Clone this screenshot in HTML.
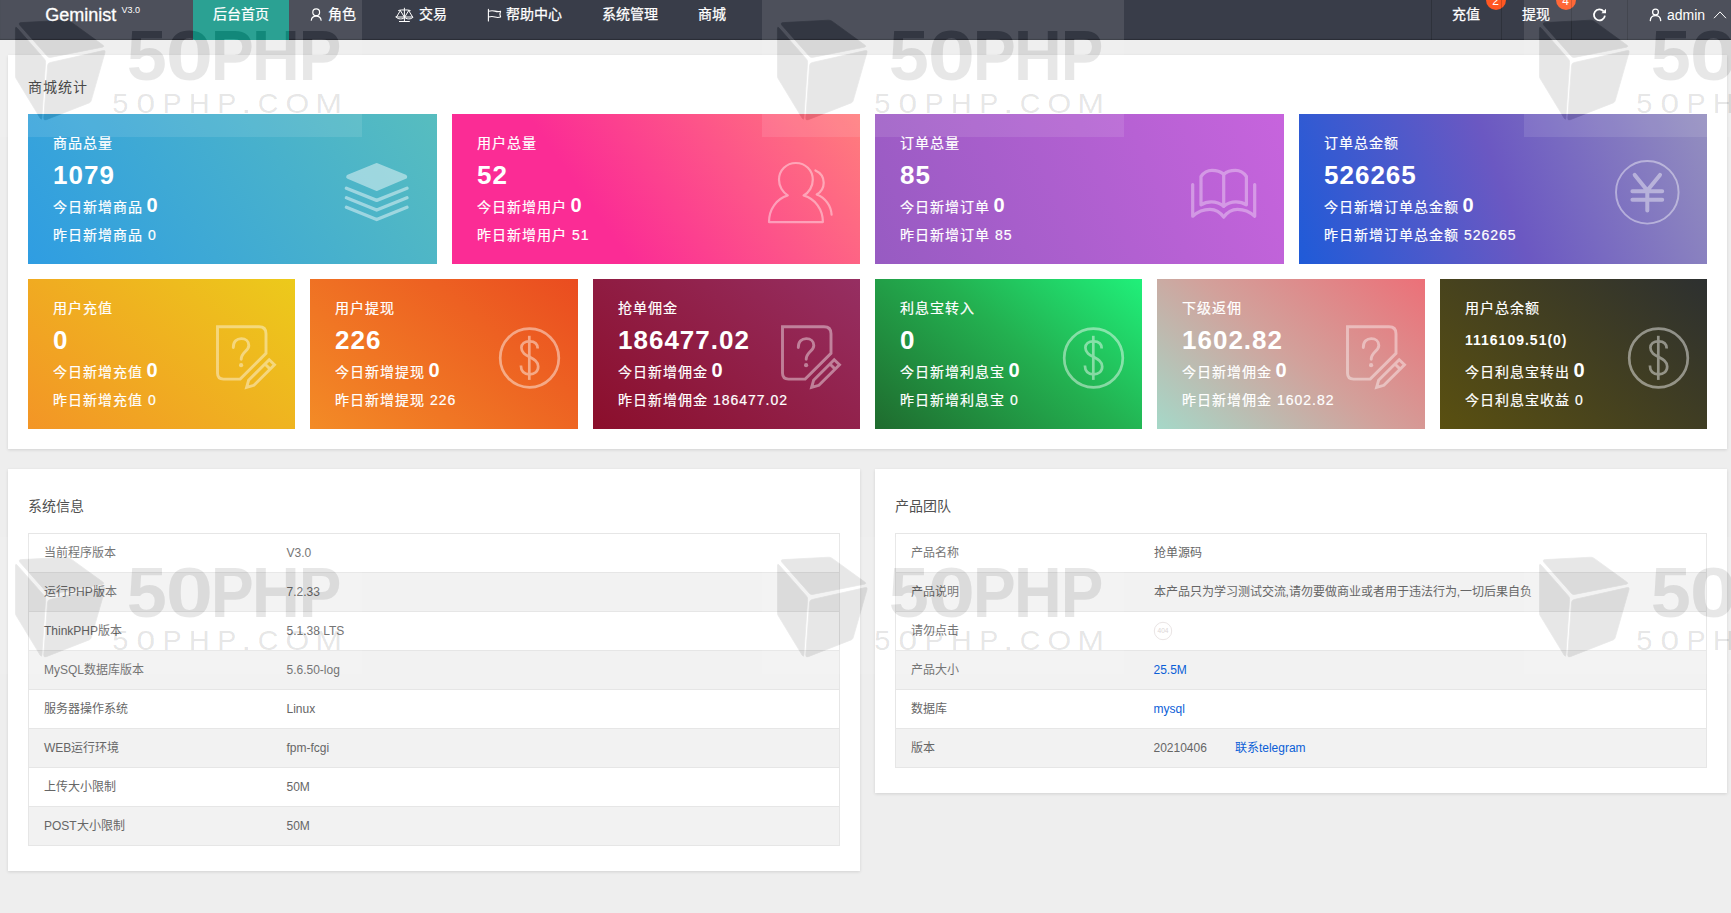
<!DOCTYPE html>
<html lang="zh-CN">
<head>
<meta charset="utf-8">
<title>Geminist</title>
<style>
*{box-sizing:border-box;margin:0;padding:0}
html,body{width:1731px;height:913px;overflow:hidden}
body{position:relative;background:#eeeeee;font-family:"Liberation Sans",sans-serif;font-size:14px;color:#333;-webkit-font-smoothing:antialiased}
a{text-decoration:none;color:#0b5ed7}
/* ---------- top nav ---------- */
.nav{position:absolute;left:0;top:-10px;width:1731px;height:50px;background:#393d49;color:#fff;box-shadow:inset 0 -1px 1px rgba(0,0,0,.28);z-index:2}
.nav .it{position:absolute;top:0;height:50px;line-height:50px;font-size:14px;white-space:nowrap;color:#fff}
.nav .navico{position:absolute;left:0;top:10px}
.nav .cj{top:-1px;-webkit-text-stroke:.25px #fff}
.nav .logo{left:0;width:193px;font-size:18px}
.nav .logo b{font-weight:normal;position:absolute;left:45.3px;top:0;-webkit-text-stroke:.3px #fff}
.nav .logo sup{position:absolute;left:121.5px;top:-4.8px;font-size:9px}
.nav .act{left:193px;top:0;width:96px;line-height:48px;background:#149787;text-align:center}
.nav .sep{position:absolute;top:0;width:1px;height:50px;background:rgba(0,0,0,.18)}
.badge{position:absolute;width:20px;height:20px;border-radius:10px;background:#ff5722;color:#fff;font-size:12px;line-height:22px;text-align:center}
/* ---------- panels ---------- */
.panel{position:absolute;background:#fff;box-shadow:0 1px 3px rgba(0,0,0,.12)}
.ttl{position:absolute;font-size:14px;line-height:20px;color:#505050;white-space:nowrap}
/* ---------- stat cards ---------- */
.card{position:absolute;height:150px;color:#fff;padding:15px 25px;letter-spacing:1px;white-space:nowrap;overflow:hidden}
.card div{height:28px;line-height:28px;font-size:14px;font-weight:normal;-webkit-text-stroke:.2px #fff}
.card div.num{height:36px;line-height:36px;font-size:26px;font-weight:bold;-webkit-text-stroke:0}
.card div.num.sm{font-size:14px}
.card div b{font-size:20px;line-height:20px;font-weight:bold;margin-left:-1.3px;-webkit-text-stroke:0}
.card svg{position:absolute;top:46px;width:65px;height:65px;overflow:visible;fill:none;stroke:#fff;stroke-linecap:round;stroke-linejoin:round}
.r1 svg{right:28px}
.r2 svg{right:18px}
/* ---------- tables ---------- */
table{position:absolute;border-collapse:collapse;width:812px;font-size:12px;color:#666;table-layout:fixed}
td{height:39px;padding:0 15px;border:1px solid #e6e6e6;border-left:none;border-right:none;line-height:20px;white-space:nowrap}
table{border:1px solid #e6e6e6}
tr:nth-child(even) td{background:#f2f2f2}
td:first-child{width:243px}
/* ---------- watermark ---------- */
.wms{position:absolute;left:0;top:0;z-index:5;pointer-events:none}
</style>
</head>
<body>

<!-- top navigation -->
<div class="nav">
  <div class="it logo"><b>Geminist</b><sup>V3.0</sup></div>
  <div class="it act cj">后台首页</div>
  <div class="it cj" style="left:328px">角色</div>
  <div class="it cj" style="left:419px">交易</div>
  <div class="it cj" style="left:506px">帮助中心</div>
  <div class="it cj" style="left:602px">系统管理</div>
  <div class="it cj" style="left:698px">商城</div>
  <div class="sep" style="left:1431px"></div>
  <div class="it cj" style="left:1452px">充值</div>
  <div class="badge" style="left:1485.5px;top:.3px">2</div>
  <div class="sep" style="left:1501px"></div>
  <div class="it cj" style="left:1522px">提现</div>
  <div class="badge" style="left:1555.5px;top:.3px">4</div>
  <div class="sep" style="left:1571px"></div>
  <div class="sep" style="left:1627px"></div>
  <div class="it" style="left:1667px">admin</div>
  <svg class="navico" width="1731" height="40" viewBox="0 0 1731 40" fill="none" stroke="#fff" stroke-linecap="round" stroke-linejoin="round">
    <g stroke-width="1.2"><circle cx="316.2" cy="12.3" r="3.4"/><path d="M311.3,20.2 C311.6,17.6 313.6,16.1 316.2,16.1 C318.8,16.1 320.8,17.6 321.1,20.2"/></g>
    <g stroke-width="1"><path d="M404.4,8.2 V21.4 M399.4,21.5 H409.4 M398.6,10.5 C401,9.7 402.6,10 404.4,10 C406.2,10 407.8,9.7 410.2,10.5"/><path d="M400.4,10.6 L396.5,17 M400.4,10.6 L404.3,17 M396.2,17 H404.6 C404,19.6 396.8,19.6 396.2,17 Z"/><path d="M408.7,10.6 L404.8,17 M408.7,10.6 L412.6,17 M404.5,17 H412.9 C412.3,19.6 405.1,19.6 404.5,17 Z"/></g>
    <g stroke-width="1.1"><path d="M488.4,9.4 V21 M488.4,11.2 C491,10.5 493,10.5 495,11.1 C497,11.7 499,11.7 500.6,11.2 L499.9,14.1 L500.6,17 C499,17.5 497,17.6 495,17 C493,16.4 491,16.4 488.4,17"/></g>
    <g stroke-width="1.8"><path d="M1603.6,11.3 A5.5,5.5 0 1 0 1604.9,15.6" stroke-linecap="butt"/><path d="M1606,8.7 V13.3 H1601.4 Z" fill="#fff" stroke="none"/></g>
    <g stroke-width="1.3"><circle cx="1655.5" cy="12.1" r="2.9"/><path d="M1650.3,20.6 C1650.5,17.6 1652.7,15.7 1655.5,15.7 C1658.3,15.7 1660.5,17.6 1660.7,20.6"/></g>
    <path stroke-width="1" d="M1714.3,17.9 L1720,11.9 L1725.7,17.9"/>
  </svg>
</div>

<!-- statistics panel -->
<div class="panel" style="left:8px;top:55px;width:1719px;height:394px"></div>
<div class="ttl" style="left:28px;top:77px;letter-spacing:1px">商城统计</div>

<div class="card r1" style="left:28px;top:114px;width:409px;background:linear-gradient(-125deg,#57bdbf,#2f9de2)">
  <div>商品总量</div><div class="num">1079</div><div>今日新增商品 <b>0</b></div><div>昨日新增商品 0</div>
  <svg viewBox="0 0 65 65"><g opacity=".45"><path d="M4.4,16.8 L32.7,5.2 L61,16.8 L32.7,28.8 Z" fill="#fff" stroke-width="4.4"/><g stroke-width="3.3"><path d="M2.4,28.2 L32.7,40.4 L63,28.2"/><path d="M2.4,37.8 L32.7,50 L63,37.8"/><path d="M2.4,47.3 L32.7,59.5 L63,47.3"/></g></g></svg>
</div>
<div class="card r1" style="left:452px;top:114px;width:408px;background:linear-gradient(-125deg,#ff7d7d,#fb2c95 65%)">
  <div>用户总量</div><div class="num">52</div><div>今日新增用户 <b>0</b></div><div>昨日新增用户 51</div>
  <svg viewBox="0 0 65 65"><g stroke-width="2.2" opacity=".42"><path d="M20.8,35.4 C15.5,32.5 12,26 12,19.8 C12,10.2 19.5,3 28.9,3 C38.3,3 45.8,10.2 45.8,19.8 C45.8,26 42.3,32.5 36.6,35.4 C48.3,39 55.9,49.3 55.9,62.1 L2,62.1 C2,49.3 9.3,39 20.8,35.4 Z"/><path d="M48.4,10.4 C53.5,12.6 56.7,17.4 56.7,22.7 C56.7,27.6 54,32 49.7,34.5 C58.2,37.8 64,45.5 64.6,54.7"/></g></svg>
</div>
<div class="card r1" style="left:875px;top:114px;width:409px;background:linear-gradient(-113deg,#c764dd,#975bc2)">
  <div>订单总量</div><div class="num">85</div><div>今日新增订单 <b>0</b></div><div>昨日新增订单 85</div>
  <svg viewBox="0 0 65 65"><g stroke-width="3.2" opacity=".35"><path d="M1.7,24.6 V56.2 C8,50.5 14,49.3 18.9,49.3 C25,49.3 29.5,52.5 32.7,57.2 C35.9,52.5 40.4,49.3 46.5,49.3 C51.4,49.3 57.4,50.5 63.7,56.2 V24.6"/><path d="M10,44.8 V16.5 C13,12.3 17,10.4 21,10.4 C26,10.4 30,12 32.7,14.2 C35.4,12 39.4,10.4 44.4,10.4 C48.4,10.4 52.4,12.3 55.4,16.5 V44.8 C52,42.6 48.5,41.8 45,41.8 C40,41.8 36,43.5 32.7,46.3 C29.4,43.5 25.4,41.8 20.4,41.8 C16.9,41.8 13.4,42.6 10,44.8 Z"/><path d="M32.7,14.2 V46.3"/></g></svg>
</div>
<div class="card r1" style="left:1299px;top:114px;width:408px;background:linear-gradient(-110deg,#938ebf,#6b58c2 50%,#1f5bd8)">
  <div>订单总金额</div><div class="num">526265</div><div>今日新增订单总金额 <b>0</b></div><div>昨日新增订单总金额 526265</div>
  <svg viewBox="0 0 65 65"><g opacity=".42"><circle cx="33.3" cy="32.3" r="31.3" stroke-width="1.9"/><path stroke-width="4" d="M20.7,14.9 L33.3,30.5 L46,14.9 M18.4,31.3 H48.2 M18.4,39.8 H48.2 M33.3,30.5 V50.6"/></g></svg>
</div>

<div class="card r2" style="left:28px;top:279px;width:267px;background:linear-gradient(-141deg,#ecca1b,#f39526)">
  <div>用户充值</div><div class="num">0</div><div>今日新增充值 <b>0</b></div><div>昨日新增充值 0</div>
  <svg viewBox="0 0 65 65"><g stroke-width="2.9" opacity=".42"><path d="M5.5,1.7 H47 Q54,1.7 54,8.7 V28.3 L28.2,54.1 H11.5 Q5.5,54.1 5.5,48.1 Z" stroke-linejoin="miter"/><path d="M21.3,22.6 C21.3,16.6 24.8,13.6 29.3,13.6 C33.6,13.6 36.8,16.4 36.8,20.4 C36.8,26 29.2,27.4 29.2,34.2"/><circle cx="29.1" cy="40.2" r="2.1" fill="#fff" stroke="none"/><path d="M57.2,34.7 L62.5,39.8 L41.9,60.3 L34.6,62.3 L36.6,55.3 Z M52.9,39 L58.2,44.1" stroke-linejoin="miter"/></g></svg>
</div>
<div class="card r2" style="left:310px;top:279px;width:268px;background:linear-gradient(-141deg,#ea4c20,#f38b26)">
  <div>用户提现</div><div class="num">226</div><div>今日新增提现 <b>0</b></div><div>昨日新增提现 226</div>
  <svg viewBox="0 0 65 65"><g stroke-width="2.7" opacity=".45"><circle cx="34.5" cy="33" r="29.3"/><path d="M34.3,10.8 V54.9" stroke-linecap="butt"/><path d="M42.7,23.6 C42.7,18.5 39.2,16.3 34.5,16.3 C29.6,16.3 26.4,18.8 26.4,22.8 C26.4,32.8 43.2,31.2 43.2,41.6 C43.2,46.6 39.6,49.3 34.5,49.3 C29,49.3 25.9,46.2 25.9,40.6" stroke-linecap="butt"/></g></svg>
</div>
<div class="card r2" style="left:593px;top:279px;width:267px;background:linear-gradient(-141deg,#962f62,#8b0e2b)">
  <div>抢单佣金</div><div class="num">186477.02</div><div>今日新增佣金 <b>0</b></div><div>昨日新增佣金 186477.02</div>
  <svg viewBox="0 0 65 65"><g stroke-width="2.9" opacity=".42"><path d="M5.5,1.7 H47 Q54,1.7 54,8.7 V28.3 L28.2,54.1 H11.5 Q5.5,54.1 5.5,48.1 Z" stroke-linejoin="miter"/><path d="M21.3,22.6 C21.3,16.6 24.8,13.6 29.3,13.6 C33.6,13.6 36.8,16.4 36.8,20.4 C36.8,26 29.2,27.4 29.2,34.2"/><circle cx="29.1" cy="40.2" r="2.1" fill="#fff" stroke="none"/><path d="M57.2,34.7 L62.5,39.8 L41.9,60.3 L34.6,62.3 L36.6,55.3 Z M52.9,39 L58.2,44.1" stroke-linejoin="miter"/></g></svg>
</div>
<div class="card r2" style="left:875px;top:279px;width:267px;background:linear-gradient(-141deg,#20f07a,#23b050 45%,#1f6b2e)">
  <div>利息宝转入</div><div class="num">0</div><div>今日新增利息宝 <b>0</b></div><div>昨日新增利息宝 0</div>
  <svg viewBox="0 0 65 65"><g stroke-width="2.7" opacity=".45"><circle cx="34.5" cy="33" r="29.3"/><path d="M34.3,10.8 V54.9" stroke-linecap="butt"/><path d="M42.7,23.6 C42.7,18.5 39.2,16.3 34.5,16.3 C29.6,16.3 26.4,18.8 26.4,22.8 C26.4,32.8 43.2,31.2 43.2,41.6 C43.2,46.6 39.6,49.3 34.5,49.3 C29,49.3 25.9,46.2 25.9,40.6" stroke-linecap="butt"/></g></svg>
</div>
<div class="card r2" style="left:1157px;top:279px;width:268px;background:linear-gradient(-141deg,#ec7078,#d2a19b 50%,#a5d8c8)">
  <div>下级返佣</div><div class="num">1602.82</div><div>今日新增佣金 <b>0</b></div><div>昨日新增佣金 1602.82</div>
  <svg viewBox="0 0 65 65"><g stroke-width="2.9" opacity=".42"><path d="M5.5,1.7 H47 Q54,1.7 54,8.7 V28.3 L28.2,54.1 H11.5 Q5.5,54.1 5.5,48.1 Z" stroke-linejoin="miter"/><path d="M21.3,22.6 C21.3,16.6 24.8,13.6 29.3,13.6 C33.6,13.6 36.8,16.4 36.8,20.4 C36.8,26 29.2,27.4 29.2,34.2"/><circle cx="29.1" cy="40.2" r="2.1" fill="#fff" stroke="none"/><path d="M57.2,34.7 L62.5,39.8 L41.9,60.3 L34.6,62.3 L36.6,55.3 Z M52.9,39 L58.2,44.1" stroke-linejoin="miter"/></g></svg>
</div>
<div class="card r2" style="left:1440px;top:279px;width:267px;background:linear-gradient(-141deg,#2d3030,#5a5010)">
  <div>用户总余额</div><div class="num sm">1116109.51(0)</div><div>今日利息宝转出 <b>0</b></div><div>今日利息宝收益 0</div>
  <svg viewBox="0 0 65 65"><g stroke-width="2.7" opacity=".45"><circle cx="34.5" cy="33" r="29.3"/><path d="M34.3,10.8 V54.9" stroke-linecap="butt"/><path d="M42.7,23.6 C42.7,18.5 39.2,16.3 34.5,16.3 C29.6,16.3 26.4,18.8 26.4,22.8 C26.4,32.8 43.2,31.2 43.2,41.6 C43.2,46.6 39.6,49.3 34.5,49.3 C29,49.3 25.9,46.2 25.9,40.6" stroke-linecap="butt"/></g></svg>
</div>

<!-- system info -->
<div class="panel" style="left:8px;top:469px;width:852px;height:402px"></div>
<div class="ttl" style="left:28px;top:496px">系统信息</div>
<table style="left:28px;top:533px">
  <tr><td>当前程序版本</td><td>V3.0</td></tr>
  <tr><td>运行PHP版本</td><td>7.2.33</td></tr>
  <tr><td>ThinkPHP版本</td><td>5.1.38 LTS</td></tr>
  <tr><td>MySQL数据库版本</td><td>5.6.50-log</td></tr>
  <tr><td>服务器操作系统</td><td>Linux</td></tr>
  <tr><td>WEB运行环境</td><td>fpm-fcgi</td></tr>
  <tr><td>上传大小限制</td><td>50M</td></tr>
  <tr><td>POST大小限制</td><td>50M</td></tr>
</table>

<!-- product team -->
<div class="panel" style="left:875px;top:469px;width:852px;height:324px"></div>
<div class="ttl" style="left:895px;top:496px">产品团队</div>
<table style="left:895px;top:533px">
  <tr><td>产品名称</td><td>抢单源码</td></tr>
  <tr><td>产品说明</td><td>本产品只为学习测试交流,请勿要做商业或者用于违法行为,一切后果自负</td></tr>
  <tr><td>请勿点击</td><td><svg width="20" height="20" viewBox="0 0 20 20" style="display:block;margin-left:-1px;margin-top:.5px"><circle cx="10" cy="10" r="8.7" fill="none" stroke="#e6e1e1" stroke-width=".9"/><text x="10" y="12.1" text-anchor="middle" font-family="Liberation Sans, sans-serif" font-size="6.6" fill="#ddd6d6">404</text></svg></td></tr>
  <tr><td>产品大小</td><td><a>25.5M</a></td></tr>
  <tr><td>数据库</td><td><a>mysql</a></td></tr>
  <tr><td>版本</td><td>20210406<a style="margin-left:28px">联系telegram</a></td></tr>
</table>

<!-- watermark tiles -->
<svg class="wms" width="1731" height="913" viewBox="0 0 1731 913">
  <defs>
    <g id="wmk">
      <path d="M21.3,22.6 L66.5,20.2 Q68.6,20.1 70.3,21.4 L102.8,45 Q105,46.7 102.3,47.2 L50.6,57.4 Q48.7,57.7 47.5,56.4 L19.9,25.2 Q18,22.8 21.3,22.6 Z M15.4,28.9 Q15.4,26 17.3,28.2 L44.6,59.2 Q45.7,60.5 45.6,62.2 L41.9,117.6 Q41.7,120.6 40.1,118.1 L16.1,78.5 Q15.4,77.4 15.4,76.2 Z M50.2,62.5 L103.2,50.6 Q105.8,50 105,52.6 L91.2,100.8 Q90.7,102.3 89.2,102.9 L46.2,119.7 Q43.6,120.7 43.8,117.9 L47.6,65.3 Q47.8,63 50.2,62.5 Z" stroke-width=".7" stroke-linejoin="round"/>
      <g font-family="Liberation Sans, sans-serif" font-weight="bold" font-size="70.50" stroke="none"><text transform="translate(126.68,79.50) scale(1.024,1)">5</text><text transform="translate(165.83,79.50) scale(1.208,1)">0</text><text transform="translate(210.69,79.50) scale(0.915,1)">P</text><text transform="translate(251.74,79.50) scale(0.946,1)">H</text><text transform="translate(298.72,79.50) scale(0.907,1)">P</text></g>
    </g>
    <g id="wmc" font-family="Liberation Sans, sans-serif" font-weight="normal" font-size="27.76"><text transform="translate(112.13,112.60) scale(1.048,1)">5</text><text transform="translate(136.49,112.60) scale(1.206,1)">0</text><text transform="translate(162.44,112.60) scale(1.035,1)">P</text><text transform="translate(188.81,112.60) scale(1.051,1)">H</text><text transform="translate(217.24,112.60) scale(1.035,1)">P</text><text transform="translate(241.34,112.60) scale(1.286,1)">.</text><text transform="translate(257.65,112.60) scale(1.029,1)">C</text><text transform="translate(285.46,112.60) scale(1.098,1)">O</text><text transform="translate(315.36,112.60) scale(1.158,1)">M</text></g>
    <mask id="wmm" maskUnits="userSpaceOnUse" x="0" y="0" width="362" height="137">
      <rect width="362" height="137" fill="#fff"/>
      <use href="#wmk" fill="#000" stroke="#000"/><use href="#wmc" fill="#000"/>
    </mask>
    <g id="wmt">
      <rect width="362" height="137" fill="#fff" fill-opacity=".1" mask="url(#wmm)"/>
      <use href="#wmk" fill="#000" stroke="#000" opacity=".092"/>
      <use href="#wmc" fill="#000" fill-opacity=".11"/>
    </g>
  </defs>
  <use href="#wmt" x="0" y="0"/><use href="#wmt" x="762" y="0"/><use href="#wmt" x="1524" y="0"/>
  <use href="#wmt" x="0" y="537"/><use href="#wmt" x="762" y="537"/><use href="#wmt" x="1524" y="537"/>
</svg>

</body>
</html>
